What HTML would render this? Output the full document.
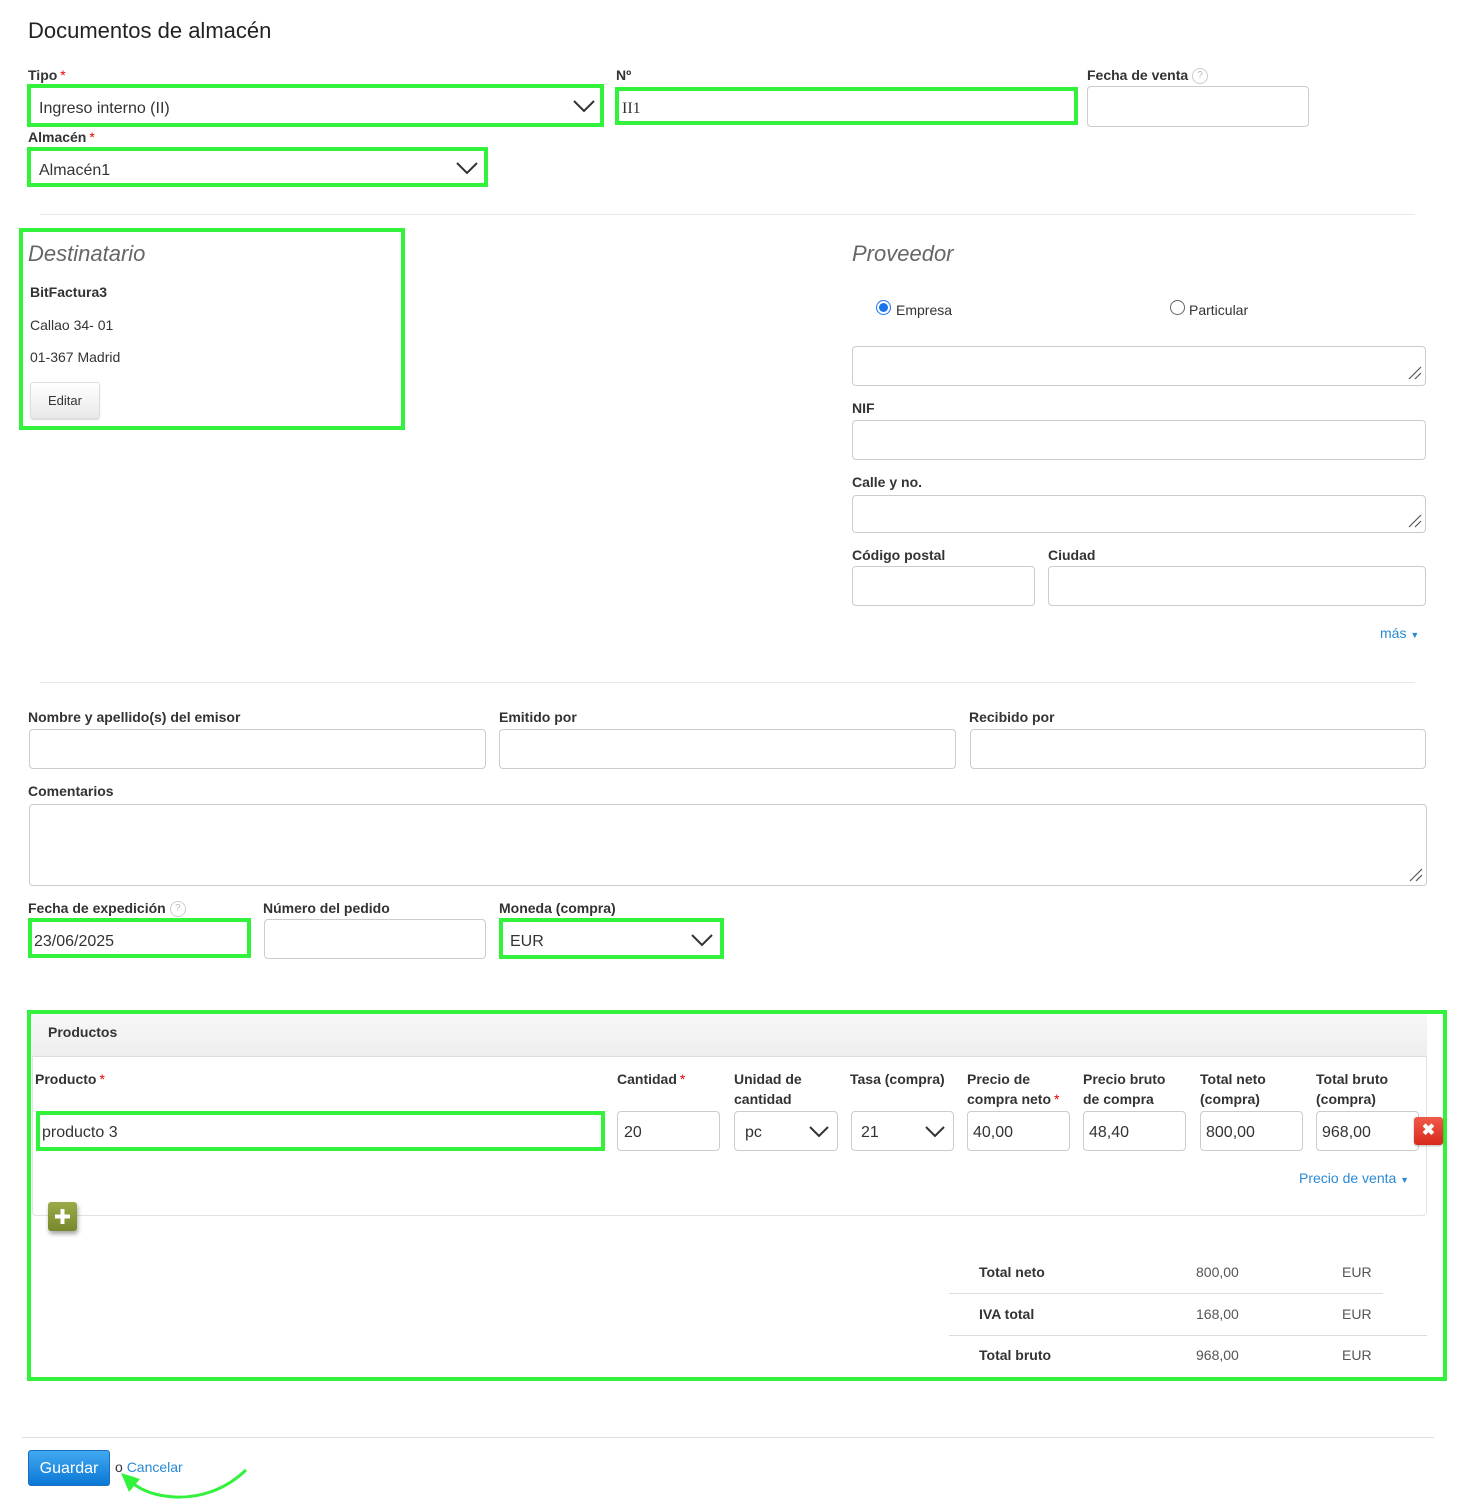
<!DOCTYPE html>
<html><head><meta charset="utf-8"><style>
*{box-sizing:border-box;margin:0;padding:0}
body{width:1458px;height:1508px;position:relative;background:#fff;font-family:"Liberation Sans",Arial,sans-serif;color:#333;overflow:hidden}
.a{position:absolute}
.l{position:absolute;font-size:14px;font-weight:bold;line-height:16px;color:#333;white-space:nowrap}
.l2{position:absolute;font-size:14px;font-weight:bold;line-height:20px;color:#333}
.r{color:#e00;font-weight:normal;margin-left:3px}
.in{position:absolute;border:1px solid #ccc;border-radius:4px;background:#fff}
.g{position:absolute;border:4px solid #33f23b}
.t{position:absolute;font-size:16px;color:#333;line-height:18px;white-space:nowrap;margin-top:2px}
.hr{position:absolute;height:1px;background:#e8e8e8}
.q{display:inline-block;width:16px;height:16px;border:1px solid #ccc;border-radius:50%;font-size:10px;color:#bbb;text-align:center;line-height:14px;font-weight:normal;vertical-align:middle;margin-left:4px}
.rs{position:absolute;width:14px;height:14px}
</style></head><body>
<div class="a" style="left:28px;top:18px;font-size:22px;line-height:26px;color:#222">Documentos de almacén</div>

<div class="l" style="left:28px;top:67px">Tipo<span class="r">*</span></div>
<div class="g" style="left:27px;top:84px;width:577px;height:43px"></div>
<div class="t" style="left:39px;top:98px">Ingreso interno (II)</div>
<svg class="a" style="left:573px;top:99px" width="22" height="14"><polyline points="1,2 11,12 21,2" fill="none" stroke="#333" stroke-width="2"/></svg>

<div class="l" style="left:616px;top:67px">Nº</div>
<div class="g" style="left:615px;top:87px;width:463px;height:38px"></div>
<div class="t" style="left:622px;top:98px;font-family:'Liberation Serif',serif">II1</div>

<div class="l" style="left:1087px;top:67px">Fecha de venta<span class="q">?</span></div>
<div class="in" style="left:1087px;top:86px;width:222px;height:41px"></div>

<div class="l" style="left:28px;top:129px">Almacén<span class="r">*</span></div>
<div class="g" style="left:27px;top:147px;width:461px;height:40px"></div>
<div class="t" style="left:39px;top:160px">Almacén1</div>
<svg class="a" style="left:456px;top:161px" width="22" height="14"><polyline points="1,2 11,12 21,2" fill="none" stroke="#333" stroke-width="2"/></svg>

<div class="hr" style="left:40px;top:214px;width:1375px"></div>

<div class="g" style="left:19px;top:228px;width:386px;height:202px"></div>
<div class="a" style="left:28px;top:241px;font-size:22px;font-style:italic;color:#666;line-height:26px">Destinatario</div>
<div class="l" style="left:30px;top:284px">BitFactura3</div>
<div class="a" style="left:30px;top:317px;font-size:14px;line-height:16px">Callao 34- 01</div>
<div class="a" style="left:30px;top:349px;font-size:14px;line-height:16px">01-367 Madrid</div>
<div class="a" style="left:30px;top:382px;width:70px;height:37px;border:1px solid #ddd;border-radius:3px;background:linear-gradient(#fff,#e9e9e9);font-size:13px;text-align:center;line-height:36px;box-shadow:0 1px 1px rgba(0,0,0,.15)">Editar</div>

<div class="a" style="left:852px;top:241px;font-size:22px;font-style:italic;color:#666;line-height:26px">Proveedor</div>
<div class="a" style="left:876px;top:300px;width:15px;height:15px;border-radius:50%;border:1px solid #1a73e8;background:#fff"><div style="margin:2px;width:9px;height:9px;border-radius:50%;background:#1a73e8"></div></div>
<div class="a" style="left:896px;top:302px;font-size:14px;line-height:16px">Empresa</div>
<div class="a" style="left:1170px;top:300px;width:15px;height:15px;border-radius:50%;border:1px solid #666"></div>
<div class="a" style="left:1189px;top:302px;font-size:14px;line-height:16px">Particular</div>
<div class="in" style="left:852px;top:346px;width:574px;height:40px"></div>
<svg class="rs" style="left:1408px;top:366px"><path d="M1 13L13 1M7 13L13 7" stroke="#555" stroke-width="1.2"/></svg>
<div class="l" style="left:852px;top:400px">NIF</div>
<div class="in" style="left:852px;top:420px;width:574px;height:40px"></div>
<div class="l" style="left:852px;top:474px">Calle y no.</div>
<div class="in" style="left:852px;top:495px;width:574px;height:38px"></div>
<svg class="rs" style="left:1408px;top:514px"><path d="M1 13L13 1M7 13L13 7" stroke="#555" stroke-width="1.2"/></svg>
<div class="l" style="left:852px;top:547px">Código postal</div>
<div class="l" style="left:1048px;top:547px">Ciudad</div>
<div class="in" style="left:852px;top:566px;width:183px;height:40px"></div>
<div class="in" style="left:1048px;top:566px;width:378px;height:40px"></div>
<div class="a" style="left:1380px;top:625px;font-size:14px;color:#2a8ad4;line-height:16px">más <span style="font-size:9px">▼</span></div>

<div class="hr" style="left:40px;top:682px;width:1375px"></div>

<div class="l" style="left:28px;top:709px">Nombre y apellido(s) del emisor</div>
<div class="l" style="left:499px;top:709px">Emitido por</div>
<div class="l" style="left:969px;top:709px">Recibido por</div>
<div class="in" style="left:29px;top:729px;width:457px;height:40px"></div>
<div class="in" style="left:499px;top:729px;width:457px;height:40px"></div>
<div class="in" style="left:970px;top:729px;width:456px;height:40px"></div>

<div class="l" style="left:28px;top:783px">Comentarios</div>
<div class="in" style="left:29px;top:804px;width:1398px;height:82px"></div>
<svg class="rs" style="left:1409px;top:868px"><path d="M1 13L13 1M7 13L13 7" stroke="#555" stroke-width="1.2"/></svg>

<div class="l" style="left:28px;top:900px">Fecha de expedición<span class="q">?</span></div>
<div class="l" style="left:263px;top:900px">Número del pedido</div>
<div class="l" style="left:499px;top:900px">Moneda (compra)</div>
<div class="g" style="left:28px;top:918px;width:223px;height:40px"></div>
<div class="t" style="left:34px;top:931px">23/06/2025</div>
<div class="in" style="left:264px;top:919px;width:222px;height:40px"></div>
<div class="g" style="left:499px;top:918px;width:225px;height:41px"></div>
<div class="t" style="left:510px;top:931px">EUR</div>
<svg class="a" style="left:691px;top:933px" width="22" height="14"><polyline points="1,2 11,12 21,2" fill="none" stroke="#333" stroke-width="2"/></svg>

<div class="a" style="left:32px;top:1014px;width:1395px;height:202px;border:1px solid #e3e3e3;border-radius:0 0 4px 4px"></div>
<div class="a" style="left:32px;top:1014px;width:1395px;height:43px;background:linear-gradient(#f7f7f7,#eeeeee);border-bottom:1px solid #ddd"></div>
<div class="l" style="left:48px;top:1024px">Productos</div>
<div class="g" style="left:27px;top:1010px;width:1420px;height:371px"></div>

<div class="l" style="left:35px;top:1071px">Producto<span class="r">*</span></div>
<div class="l" style="left:617px;top:1071px">Cantidad<span class="r">*</span></div>
<div class="l2" style="left:734px;top:1069px">Unidad de<br>cantidad</div>
<div class="l2" style="left:850px;top:1069px">Tasa (compra)</div>
<div class="l2" style="left:967px;top:1069px">Precio de<br>compra neto<span class="r">*</span></div>
<div class="l2" style="left:1083px;top:1069px">Precio bruto<br>de compra</div>
<div class="l2" style="left:1200px;top:1069px">Total neto<br>(compra)</div>
<div class="l2" style="left:1316px;top:1069px">Total bruto<br>(compra)</div>

<div class="g" style="left:36px;top:1111px;width:569px;height:40px"></div>
<div class="t" style="left:42px;top:1122px">producto 3</div>
<div class="in" style="left:617px;top:1111px;width:103px;height:40px"></div><div class="t" style="left:624px;top:1122px">20</div>
<div class="in" style="left:734px;top:1111px;width:104px;height:40px"></div><div class="t" style="left:745px;top:1122px">pc</div>
<svg class="a" style="left:809px;top:1125px" width="20" height="13"><polyline points="1,2 10,11 19,2" fill="none" stroke="#333" stroke-width="2"/></svg>
<div class="in" style="left:851px;top:1111px;width:103px;height:40px"></div><div class="t" style="left:861px;top:1122px">21</div>
<svg class="a" style="left:925px;top:1125px" width="20" height="13"><polyline points="1,2 10,11 19,2" fill="none" stroke="#333" stroke-width="2"/></svg>
<div class="in" style="left:967px;top:1111px;width:103px;height:40px"></div><div class="t" style="left:973px;top:1122px">40,00</div>
<div class="in" style="left:1083px;top:1111px;width:103px;height:40px"></div><div class="t" style="left:1089px;top:1122px">48,40</div>
<div class="in" style="left:1200px;top:1111px;width:103px;height:40px"></div><div class="t" style="left:1206px;top:1122px">800,00</div>
<div class="in" style="left:1316px;top:1111px;width:103px;height:40px"></div><div class="t" style="left:1322px;top:1122px">968,00</div>
<div class="a" style="left:1414px;top:1117px;width:29px;height:28px;border-radius:3px;background:linear-gradient(#f05a4a,#d8291c);color:#fff;font-weight:bold;font-size:16px;text-align:center;line-height:28px;box-shadow:0 1px 2px rgba(0,0,0,.3)">✖</div>
<div class="a" style="left:1299px;top:1170px;font-size:14px;color:#2a8ad4;line-height:16px">Precio de venta <span style="font-size:9px">▼</span></div>

<div class="a" style="left:48px;top:1202px;width:29px;height:29px;border-radius:3px;background:linear-gradient(#9aab4a,#77882c);box-shadow:1px 3px 4px rgba(0,0,0,.35)"><svg width="29" height="29"><path d="M14.5 7v15M7 14.5h15" stroke="#fff" stroke-width="4"/></svg></div>

<div class="l" style="left:979px;top:1264px">Total neto</div>
<div class="a" style="left:1196px;top:1264px;font-size:14px;color:#555;line-height:16px">800,00</div>
<div class="a" style="left:1342px;top:1264px;font-size:14px;color:#555;line-height:16px">EUR</div>
<div class="hr" style="left:949px;top:1293px;width:434px;background:#ddd"></div>
<div class="l" style="left:979px;top:1306px">IVA total</div>
<div class="a" style="left:1196px;top:1306px;font-size:14px;color:#555;line-height:16px">168,00</div>
<div class="a" style="left:1342px;top:1306px;font-size:14px;color:#555;line-height:16px">EUR</div>
<div class="hr" style="left:949px;top:1335px;width:478px;background:#ddd"></div>
<div class="l" style="left:979px;top:1347px">Total bruto</div>
<div class="a" style="left:1196px;top:1347px;font-size:14px;color:#555;line-height:16px">968,00</div>
<div class="a" style="left:1342px;top:1347px;font-size:14px;color:#555;line-height:16px">EUR</div>

<div class="hr" style="left:22px;top:1437px;width:1412px;background:#ddd"></div>
<div class="a" style="left:28px;top:1450px;width:82px;height:36px;border-radius:3px;border:1px solid #1a6fc0;background:linear-gradient(#42a8f0,#0a78d6);color:#fff;font-size:16px;text-align:center;line-height:36px">Guardar</div>
<div class="a" style="left:115px;top:1459px;font-size:14px;line-height:16px">o <span style="color:#2a8ad4">Cancelar</span></div>
<svg class="a" style="left:115px;top:1465px" width="140" height="40"><path d="M131 5C110 25 85 33 60 32 40 31 25 25 15 16" fill="none" stroke="#33f23b" stroke-width="3"/><path d="M6 8L25 14 14 27Z" fill="#33f23b"/></svg>
</body></html>
